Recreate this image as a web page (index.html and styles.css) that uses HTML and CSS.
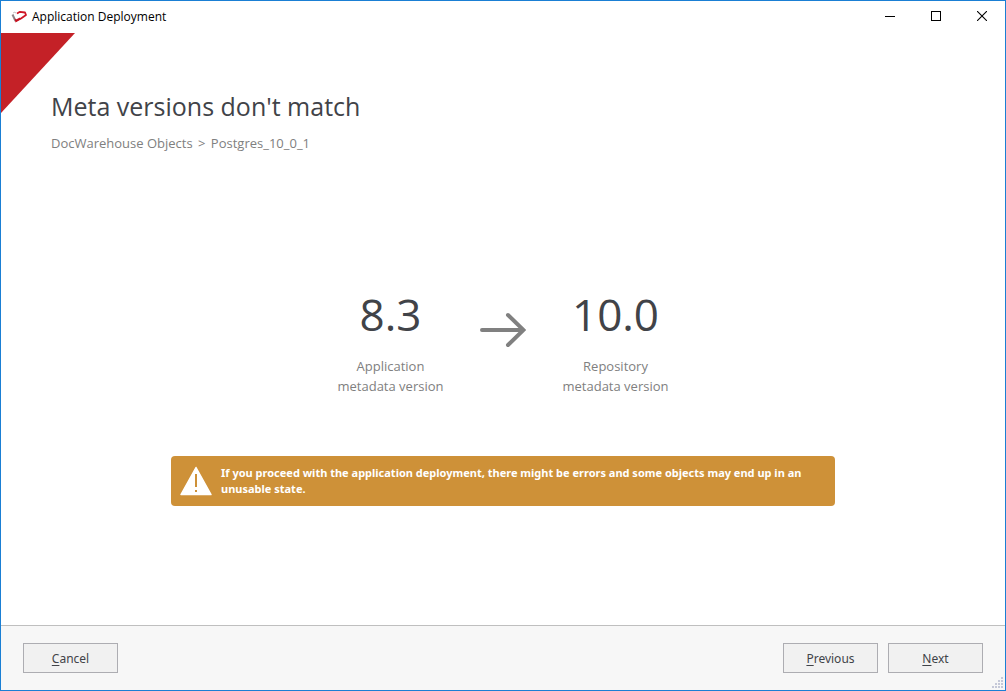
FILE: index.html
```html
<!DOCTYPE html>
<html lang="en">
<head>
<meta charset="utf-8">
<meta name="viewport" content="width=device-width, initial-scale=1">
<title>Application Deployment</title>
<link rel="stylesheet" href="styles.css">
</head>
<body>
<div class="window">
  <header class="titlebar">
    <svg class="app-icon" width="17" height="14" viewBox="0 0 17 14" aria-hidden="true">
      <path d="M1.500 4.500L4.500 11" stroke="#8d8588" stroke-width="2" fill="none"/>
      <path d="M2 3L4 2L5 3.500" stroke="#c9c3c5" stroke-width="1" fill="none"/>
      <path d="M6 3.500L9 1.800L14 2.500L15 5L10 8.500L5 11" stroke="#cf1626" stroke-width="1.800" fill="none" stroke-linejoin="round"/>
      <path d="M3.500 8L5 9.500L9 7.500L10 9L4.500 12.500Z" fill="#c4101f"/>
    </svg>
    <span class="titlebar-text">Application Deployment</span>
    <div class="window-controls">
      <button class="window-button" type="button" aria-label="Minimize">
        <svg width="10" height="10" viewBox="0 0 10 10" shape-rendering="crispEdges"><path d="M0 5h10v1H0z" fill="#000"/></svg>
      </button>
      <button class="window-button" type="button" aria-label="Maximize">
        <svg width="10" height="10" viewBox="0 0 10 10" shape-rendering="crispEdges"><path d="M.5 .5h9v9h-9z" fill="none" stroke="#000"/></svg>
      </button>
      <button class="window-button" type="button" aria-label="Close">
        <svg width="10" height="10" viewBox="0 0 10 10"><path d="M0 0L10 10M10 0L0 10" stroke="#000" stroke-width="1.100"/></svg>
      </button>
    </div>
  </header>

  <main class="page">
    <div class="corner" aria-hidden="true"></div>
    <h1 class="heading">Meta versions don't match</h1>
    <p class="breadcrumb">DocWarehouse Objects <span class="separator">&gt;</span> Postgres_10_0_1</p>

    <div class="content">
      <div class="versions">
        <div class="version">
          <div class="version-number">8.3</div>
          <div class="version-label">Application<br>metadata version</div>
        </div>
        <svg class="arrow" width="46" height="36" viewBox="0 0 46 36" aria-label="to" role="img">
          <path d="M2 18H43M28 3L43.500 18L28 33" fill="none" stroke="#808080" stroke-width="4" stroke-linecap="round"/>
        </svg>
        <div class="version">
          <div class="version-number">10.0</div>
          <div class="version-label">Repository<br>metadata version</div>
        </div>
      </div>

      <div class="warning" role="alert">
        <svg class="warning-icon" width="32" height="30" viewBox="0 0 32 30" aria-hidden="true">
          <path d="M16 1.500L31 28.500H1Z" fill="#fff" stroke="#fff" stroke-width="1.500" stroke-linejoin="round"/>
          <path d="M15 8h2v13h-2zM15 24h2v2h-2z" fill="#ce9138"/>
        </svg>
        <p class="warning-text">If you proceed with the application deployment, there might be errors and some objects may end up in an unusable state.</p>
      </div>
    </div>
  </main>

  <footer class="footer">
    <button class="button" type="button"><u>C</u>ancel</button>
    <div class="footer-actions">
      <button class="button" type="button"><u>P</u>revious</button>
      <button class="button" type="button"><u>N</u>ext</button>
    </div>
    <svg class="grip" width="11" height="11" viewBox="0 0 11 11" shape-rendering="crispEdges" aria-hidden="true">
      <path d="M9 0h2v2H9zM6 3h2v2H6zM9 3h2v2H9zM3 6h2v2H3zM6 6h2v2H6zM9 6h2v2H9zM0 9h2v2H0zM3 9h2v2H3zM6 9h2v2H6zM9 9h2v2H9z" fill="#c5c8d8"/>
    </svg>
  </footer>
</div>
</body>
</html>
```

FILE: styles.css
```css
* {
  box-sizing: border-box;
}

body {
  margin: 0;
  font-family: "Segoe UI", "Open Sans", "Noto Sans", sans-serif;
  font-size: 13px;
  color: #808080;
}

.window {
  display: flex;
  flex-direction: column;
  min-height: 100vh;
  border: 1px solid #1a7fd4;
  background: #fff;
}

.titlebar {
  display: flex;
  align-items: center;
  height: 32px;
  padding-left: 10px;
  gap: 4px;
  color: #000;
  font-size: 12px;
  line-height: 16px;
}

.titlebar-text {
  padding-bottom: 1px;
}

.window-controls {
  display: flex;
  align-self: stretch;
  margin-left: auto;
}

.window-button {
  display: flex;
  align-items: center;
  justify-content: center;
  width: 46px;
  padding: 0 0 2px;
  border: 0;
  background: none;
}

.page {
  position: relative;
  display: flex;
  flex: 1;
  flex-direction: column;
  padding: 55px 50px 0;
}

.corner {
  position: absolute;
  top: 0;
  left: 0;
  width: 74px;
  height: 80px;
  background: #c42127;
  clip-path: polygon(0 0, 100% 0, 0 100%);
}

.heading {
  margin: 0;
  color: #414348;
  font-size: 25px;
  font-weight: 400;
  line-height: 36px;
}

.breadcrumb {
  margin: 9px 0 0;
  line-height: 20px;
}

.separator {
  margin: 0 2px;
}

.content {
  display: flex;
  flex: 1;
  flex-direction: column;
  align-items: center;
  justify-content: center;
  gap: 60px;
  padding-top: 12px;
}

.versions {
  display: flex;
  gap: 36px;
}

.version {
  width: 107px;
  text-align: center;
  white-space: nowrap;
}

.version-number {
  color: #414348;
  font-size: 44px;
  line-height: 60px;
}

.version-label {
  margin-top: 12px;
  line-height: 20px;
}

.arrow {
  margin-top: 28px;
}

.warning {
  display: flex;
  align-items: center;
  gap: 9px;
  width: 100%;
  max-width: 664px;
  min-height: 50px;
  padding: 9px;
  border-radius: 4px;
  background: #ce9138;
  color: #fff;
}

.warning-icon {
  flex: none;
}

.warning-text {
  margin: 0;
  font-family: "Segoe UI", "Noto Sans", sans-serif;
  font-size: 11px;
  font-weight: 700;
  line-height: 16px;
}

.footer {
  position: relative;
  display: flex;
  justify-content: space-between;
  padding: 17px 22px;
  border-top: 1px solid #bfbfbf;
  background: #f7f7f7;
}

.footer-actions {
  display: flex;
  gap: 10px;
}

.button {
  width: 95px;
  height: 30px;
  padding: 0;
  border: 1px solid #adadb2;
  background: #f1f1f1;
  color: #414348;
  font-family: "Segoe UI", "Noto Sans", sans-serif;
  font-size: 12px;
}

.button u {
  text-underline-offset: 2px;
}

.grip {
  position: absolute;
  right: 2px;
  bottom: 2px;
}
```
